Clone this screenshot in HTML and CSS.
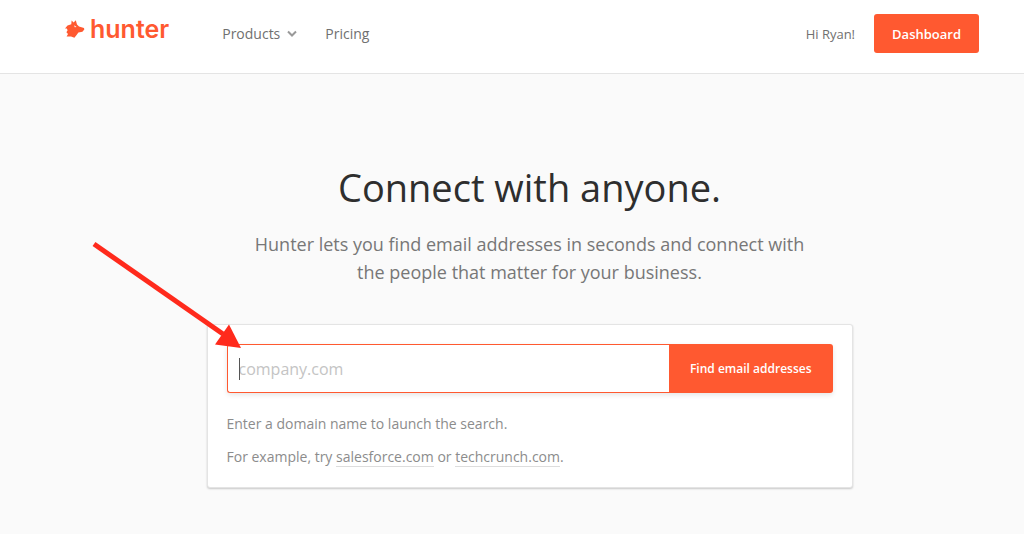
FILE: index.html
```
<!DOCTYPE html>
<html lang="en">
<head>
<meta charset="utf-8">
<meta name="viewport" content="width=device-width, initial-scale=1">
<title>Hunter</title>
<link rel="stylesheet" href="styles.css">
</head>
<body>
<header class="topbar">
  <a class="brand" href="#">
    <svg class="brand-icon" viewBox="0 0 20 18" aria-hidden="true">
      <path fill="currentColor" d="M0 8.400 2.500 5.400 6.300 4.200 6.600 0.600 8.600 2.600 10.800 0.200 12 4.600 14 6.400 19 8 19.300 9.600 17.400 11.800 13.400 12.600 11.600 15 9.400 17.800 6 16.600 1.600 16.600 3 14 1.400 12.200 2.600 10.200 1.800 8.600Z"/>
      <path fill="#fff" d="M9 5.200 11.600 6.900 9.800 7.200Z"/>
    </svg>
    <span class="brand-name">hunter</span>
  </a>
  <nav class="menu">
    <button class="menu-item" type="button">Products
      <svg class="chevron" viewBox="0 0 10 7" aria-hidden="true"><path d="M1 1.500 5 5.500 9 1.500" fill="none" stroke="currentColor" stroke-width="2"/></svg>
    </button>
    <a class="menu-item" href="#">Pricing</a>
  </nav>
  <span class="greeting">Hi Ryan!</span>
  <a class="dashboard" href="#">Dashboard</a>
</header>
<main class="hero">
  <h1 class="title">Connect with anyone.</h1>
  <p class="lead">Hunter lets you find email addresses in seconds and connect with the people that matter for your business.</p>
  <section class="card">
    <form class="search">
      <input class="domain" type="text" placeholder="company.com" aria-label="Domain name">
      <button class="find" type="button">Find email addresses</button>
      <span class="caret"></span>
      <svg class="arrow" viewBox="0 0 150 110" aria-hidden="true">
        <path d="M3 3 132 93" stroke="#ff2a1c" stroke-width="5"/>
        <path d="M150 107 124 103.500 138 83.500Z" fill="#ff2a1c"/>
      </svg>
    </form>
    <p class="hint">Enter a domain name to launch the search.</p>
    <p class="hint">For example, try <a href="#">salesforce.com</a> or <a href="#">techcrunch.com</a>.</p>
  </section>
</main>
</body>
</html>
```
FILE: styles.css
```
* { box-sizing: border-box; }

body {
  margin: 0;
  min-height: 100vh;
  background: #fafafa;
  color: #707070;
  font: 14px/20px "Open Sans", "Noto Sans", sans-serif;
}

a { color: inherit; text-decoration: none; }

.topbar {
  display: flex;
  align-items: center;
  padding: 14px 45px 20px 65px;
  background: #fff;
  border-bottom: 1px solid #e4e4e4;
}

.brand {
  display: flex;
  align-items: center;
  gap: 5px;
  padding-bottom: 9px;
  color: #ff5930;
}
.brand-icon { width: 20px; height: 18px; }
.brand-name { font: 600 25px/28px Inter, sans-serif; }

.menu {
  display: flex;
  gap: 28px;
  margin-left: 53px;
}
.menu-item {
  display: flex;
  align-items: center;
  gap: 7px;
  padding: 0;
  border: 0;
  background: none;
  color: inherit;
  font: inherit;
}
.chevron { width: 10px; height: 7px; color: #999; }

.greeting { margin-left: auto; font-size: 13px; }

.dashboard {
  margin-left: 19px;
  padding: 10px 18px 9px;
  border-radius: 3px;
  background: #ff5930;
  color: #fff;
  font-size: 13px;
  font-weight: 600;
}

.hero {
  display: flex;
  flex-direction: column;
  align-items: center;
  padding: 86px 0 46px 35px;
}

.title {
  margin: 0;
  color: #2e2e2e;
  font-size: 38px;
  font-weight: 400;
  line-height: 54px;
}

.lead {
  max-width: 580px;
  margin: 16px 0 38px;
  color: #777;
  font-size: 18px;
  line-height: 28px;
  text-align: center;
}

.card {
  width: 100%;
  max-width: 646px;
  padding: 19px 19px 20px;
  border: 1px solid #e4e4e4;
  border-radius: 3px;
  background: #fff;
  box-shadow: 0 1px 2px rgba(0, 0, 0, 0.2);
}

.search {
  position: relative;
  display: flex;
  margin-bottom: 21px;
  border-radius: 3px;
  box-shadow: 0 2px 5px rgba(0, 0, 0, 0.1);
}
.domain {
  flex: 1;
  min-width: 0;
  height: 49px;
  padding: 0 11px;
  border: 1px solid #ff5930;
  border-right: 0;
  border-radius: 3px 0 0 3px;
  outline: 0;
  background: #fff;
  font: 16px "Open Sans", "Noto Sans", sans-serif;
}
.domain::placeholder { color: #c4c4c4; }
.find {
  padding: 0 21px;
  border: 0;
  border-radius: 0 3px 3px 0;
  background: #ff5930;
  color: #fff;
  font: 600 12px "Open Sans", "Noto Sans", sans-serif;
}
.caret {
  position: absolute;
  top: 14px;
  left: 12px;
  width: 1px;
  height: 22px;
  background: #555;
}
.arrow {
  position: absolute;
  top: -103px;
  left: -136px;
  width: 150px;
  height: 110px;
}

.hint { margin: 0; color: #8c8c8c; }
.hint + .hint { margin-top: 13px; }
.hint a { border-bottom: 1px solid #ddd; }
```
